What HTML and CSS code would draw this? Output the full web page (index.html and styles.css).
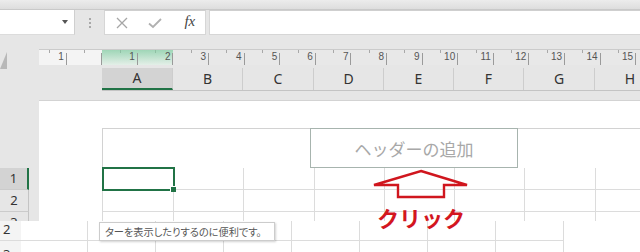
FILE: index.html
```html
<!DOCTYPE html>
<html lang="ja">
<head>
<meta charset="utf-8">
<link rel="stylesheet" href="styles.css">
</head>
<body>
<div class="topstrip"></div>
<div class="fbar">
  <div class="namebox"><span class="dd"></span></div>
  <div class="fsep"><i></i><i></i><i></i></div>
  <div class="fbtns">
    <div class="fb"><svg width="12" height="12" viewBox="0 0 12 12"><path d="M1 1L11 11M11 1L1 11" stroke="#a6a6a6" stroke-width="1.3" fill="none"/></svg></div>
    <div class="fb"><svg width="14" height="12" viewBox="0 0 14 12"><path d="M1 6.5L5 10L13 2" stroke="#b0b0b0" stroke-width="1.8" fill="none"/></svg></div>
    <div class="fb"><span class="fx">fx</span></div>
  </div>
  <div class="finput"></div>
</div>
<div class="rulerrow">
  <div class="corner"><div class="tri"></div></div>
  <div class="ruler">
    <div class="rc part lite"><span>1</span></div>
    <div class="rc lite"></div>
    <div class="rc green"><span>1</span></div>
    <div class="rc green"><span>2</span></div>
    <div class="rc"><span>3</span></div>
    <div class="rc"><span>4</span></div>
    <div class="rc"><span>5</span></div>
    <div class="rc"><span>6</span></div>
    <div class="rc"><span>7</span></div>
    <div class="rc"><span>8</span></div>
    <div class="rc"><span>9</span></div>
    <div class="rc"><span>10</span></div>
    <div class="rc"><span>11</span></div>
    <div class="rc"><span>12</span></div>
    <div class="rc"><span>13</span></div>
    <div class="rc"><span>14</span></div>
    <div class="rc"><span>15</span></div>
  </div>
</div>
<div class="colrow">
  <div class="colcorner"></div>
  <div class="colheads">
    <div class="ch sel">A</div>
    <div class="ch w70">B</div>
    <div class="ch">C</div>
    <div class="ch w70">D</div>
    <div class="ch w70">E</div>
    <div class="ch w70">F</div>
    <div class="ch">G</div>
    <div class="ch">H</div>
  </div>
</div>
<div class="sheet">
  <div class="rowheads">
    <div class="rh-spacer"></div>
    <div class="rh sel">1</div>
    <div class="rh">2</div>
    <div class="rh">3</div>
  </div>
  <div class="page">
    <div class="hdr">
      <div class="hdr-left"></div>
      <div class="hdr-center">ヘッダーの追加</div>
      <div class="hdr-right"></div>
    </div>
    <div class="grid">
      <div class="cell active"></div><div class="cell"></div><div class="cell"></div><div class="cell"></div><div class="cell"></div><div class="cell"></div><div class="cell"></div><div class="cell"></div>
      <div class="cell"></div><div class="cell"></div><div class="cell"></div><div class="cell"></div><div class="cell"></div><div class="cell"></div><div class="cell"></div><div class="cell"></div>
      <div class="cell"></div><div class="cell"></div><div class="cell"></div><div class="cell"></div><div class="cell"></div><div class="cell"></div><div class="cell"></div><div class="cell"></div>
    </div>
  </div>
</div>

<div class="strip">
  <div class="sgrid">
    <div class="srh">2</div><div class="sc"></div><div class="sc"></div><div class="sc"></div><div class="sc"></div><div class="sc"></div><div class="sc"></div><div class="sc"></div><div class="sc"></div>
    <div class="srh low">3</div><div class="sc low"></div><div class="sc low"></div><div class="sc low"></div><div class="sc low"></div><div class="sc low"></div><div class="sc low"></div><div class="sc low"></div><div class="sc low"></div>
  </div>
  <div class="tooltip">ターを表示したりするのに便利です。</div>
</div>

<div class="annot">
  <svg class="arrow" width="98" height="30" viewBox="0 0 98 30"><polygon points="49,2 95,16 72,16 72,28 26,28 26,16 2,16" fill="none" stroke="#d0161e" stroke-width="2.4" stroke-linejoin="miter"/></svg>
  <div class="click">クリック</div>
</div>
</body>
</html>
```

FILE: styles.css
```css
body {
  margin: 0;
  width: 640px;
  height: 252px;
  overflow: hidden;
  background: #e6e6e6;
  font-family: "Noto Sans", "Noto Sans CJK JP", sans-serif;
  position: relative;
}

.topstrip {
  height: 10px;
  box-sizing: border-box;
  background: linear-gradient(#ececec, #dddddd);
  border-bottom: 1px solid #c9c9c9;
}

.fbar {
  display: flex;
  height: 25px;
  background: #e6e6e6;
}
.namebox {
  width: 75px;
  box-sizing: border-box;
  background: #fff;
  border-right: 1px solid #cfcfcf;
  border-bottom: 1px solid #dcdcdc;
  display: flex;
  justify-content: flex-end;
  align-items: center;
  padding-right: 6px;
}
.dd {
  width: 0;
  height: 0;
  border-left: 3.5px solid transparent;
  border-right: 3.5px solid transparent;
  border-top: 4px solid #555;
}
.fsep {
  width: 29px;
  display: flex;
  flex-direction: column;
  align-items: center;
  justify-content: center;
  gap: 2px;
}
.fsep i {
  display: block;
  width: 2px;
  height: 2px;
  background: #a8a8a8;
}
.fbtns {
  width: 102px;
  box-sizing: border-box;
  background: #fff;
  border: 1px solid #d6d6d6;
  border-top-color: #cfcfcf;
  display: flex;
}
.fb {
  width: 34px;
  display: flex;
  align-items: center;
  justify-content: center;
}
.fx {
  font-family: "Liberation Serif", serif;
  font-style: italic;
  font-size: 15px;
  color: #444;
  margin-top: -2px;
  margin-left: 3px;
}
.finput {
  flex: 1;
  margin-left: 3px;
  background: #fff;
  border: 1px solid #d6d6d6;
  border-top-color: #cfcfcf;
  border-right: none;
}

.rulerrow {
  display: flex;
  height: 16px;
  margin-top: 14px;
}
.corner {
  width: 39px;
  flex: none;
  position: relative;
}
.tri {
  position: absolute;
  left: 0;
  top: 3px;
  width: 0;
  height: 0;
  border-left: 7px solid transparent;
  border-bottom: 17px solid #b8b8b8;
}
.ruler {
  display: flex;
  flex: 1;
  overflow: hidden;
  box-sizing: border-box;
  border-top: 1px solid #cbcbcb;
  background-color: #e8e8e8;
}
.rc {
  flex: none;
  width: 35.6px;
  height: 15px;
  box-sizing: border-box;
  text-align: right;
  padding-right: 3px;
  font-family: "Liberation Sans", sans-serif;
  font-size: 10px;
  line-height: 14px;
  color: #555;
  background-image:
    linear-gradient(#9a9a9a, #9a9a9a),
    linear-gradient(#a8a8a8, #a8a8a8);
  background-repeat: no-repeat;
  background-size: 1px 12px, 1px 3px;
  background-position: right 0 bottom 0, 50% 0;
}
.rc.part {
  width: 27.7px;
  background-size: 1px 12px, 1px 3px;
  background-position: right 0 bottom 0, 10px 0;
}
.rc.lite {
  background-color: #f4f4f4;
}
.rc.green {
  background-color: transparent;
  background-image:
    linear-gradient(#9a9a9a, #9a9a9a),
    linear-gradient(#8fbfa3, #8fbfa3),
    linear-gradient(#9fd6b7, #e4efe8);
  background-size: 1px 12px, 1px 3px, 100% 100%;
  background-position: right 0 bottom 0, 50% 0, 0 0;
}

.colrow {
  display: flex;
  height: 23px;
  margin-top: 3px;
}
.colcorner {
  width: 102px;
  flex: none;
}
.colheads {
  display: flex;
  flex: 1;
  overflow: hidden;
  border-bottom: 1px solid #c4c4c4;
  box-sizing: border-box;
}
.ch {
  flex: none;
  width: 71px;
  box-sizing: border-box;
  border-right: 1px solid #cdcdcd;
  text-align: center;
  font-size: 14px;
  line-height: 22px;
  color: #333;
}
.ch.w70 {
  width: 70px;
}
.ch.sel {
  background: #d3d3d3;
  border-bottom: 2px solid #217346;
  line-height: 20px;
}

.sheet {
  display: flex;
  margin-top: 9px;
}
.rowheads {
  width: 39px;
  flex: none;
}
.rh-spacer {
  height: 68px;
}
.rh {
  width: 29px;
  height: 22px;
  box-sizing: border-box;
  border-bottom: 1px solid #cbcbcb;
  border-right: 1px solid #c4c4c4;
  text-align: center;
  font-size: 13px;
  line-height: 21px;
  color: #333;
}
.rh.sel {
  background: #d3d3d3;
  border-right: 2px solid #217346;
}
.page {
  flex: 1;
  min-width: 0;
  overflow: hidden;
  background: #fff;
  border-top: 1px solid #d3d3d3;
  padding: 27px 0 0 63px;
  height: 124px;
}
.hdr {
  display: flex;
  height: 40px;
}
.hdr-left {
  width: 208px;
  flex: none;
  box-sizing: border-box;
  border-top: 1px solid #d2d2d2;
  border-left: 1px solid #d2d2d2;
}
.hdr-center {
  width: 208px;
  flex: none;
  box-sizing: border-box;
  border: 1px solid #a7b4ae;
  text-align: center;
  font-family: "Noto Sans CJK JP", sans-serif;
  font-size: 17px;
  line-height: 40px;
  color: #a8a8a8;
}
.hdr-right {
  flex: 1;
  border-top: 1px solid #d2d2d2;
}
.grid {
  display: grid;
  grid-template-columns: 71px 70px 71px 70px 70px 70px 71px 71px;
  grid-auto-rows: 22px;
  width: 564px;
  border-left: 1px solid #dadada;
}
.cell {
  box-sizing: border-box;
  border-right: 1px solid #dcdcdc;
  border-bottom: 1px solid #dcdcdc;
}
.cell.active {
  position: relative;
  outline: 2px solid #217346;
  outline-offset: -1px;
}
.cell.active::after {
  content: "";
  position: absolute;
  right: -3px;
  bottom: -3px;
  width: 5px;
  height: 5px;
  background: #217346;
  border: 1px solid #fff;
  border-width: 1px 0 0 1px;
}

.strip {
  position: absolute;
  left: 0;
  top: 221px;
  width: 640px;
  height: 31px;
  background: #fff;
  z-index: 1;
}
.sgrid {
  display: grid;
  grid-template-columns: 21px 67px repeat(7, 68px);
  grid-template-rows: 20px 11px;
}
.srh {
  background: #f4f4f4;
  font-size: 13px;
  line-height: 17px;
  padding-left: 3px;
  color: #333;
  border-bottom: 1px solid #dcdcdc;
  box-sizing: border-box;
}
.srh.low {
  border-bottom: none;
  line-height: 26px;
  overflow: hidden;
}
.sc {
  box-sizing: border-box;
  border-right: 1px solid #dcdcdc;
  border-bottom: 1px solid #dcdcdc;
}
.sc.low {
  border-bottom: none;
}
.tooltip {
  position: absolute;
  left: 99px;
  top: 1px;
  width: 176px;
  height: 19px;
  box-sizing: border-box;
  background: #fff;
  border: 1px solid #cccccc;
  box-shadow: 1px 1px 2px rgba(0, 0, 0, 0.18);
  font-family: "Noto Sans CJK JP", sans-serif;
  font-size: 10.2px;
  font-feature-settings: "palt";
  line-height: 17px;
  padding-left: 5px;
  color: #555;
  white-space: nowrap;
}

.annot {
  position: absolute;
  left: 372px;
  top: 169px;
  z-index: 2;
}
.arrow {
  display: block;
}
.click {
  margin-top: 6px;
  margin-left: 5px;
  font-family: "Noto Sans CJK JP", sans-serif;
  font-weight: 700;
  font-size: 22px;
  line-height: 24px;
  color: #d3161f;
  white-space: nowrap;
}
```
